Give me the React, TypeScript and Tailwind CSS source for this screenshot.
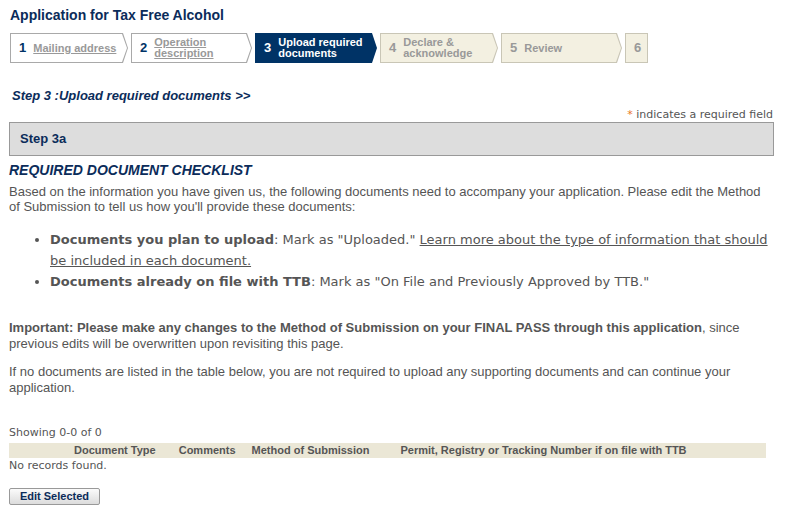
import React from 'react';

type Step = { num: string; label: string; state: 'done' | 'current' | 'todo'; width: string; last?: boolean };

const STEPS: Step[] = [
    { num: '1', label: 'Mailing address', state: 'done', width: 'w-[118px]' },
    { num: '2', label: 'Operation\ndescription', state: 'done', width: 'w-[121px]' },
    { num: '3', label: 'Upload required\ndocuments', state: 'current', width: 'w-[122px]' },
    { num: '4', label: 'Declare &\nacknowledge', state: 'todo', width: 'w-[118px]' },
    { num: '5', label: 'Review', state: 'todo', width: 'w-[121px]' },
    { num: '6', label: '', state: 'todo', width: 'w-[23px]', last: true },
];

const arrowClip = '[clip-path:polygon(0_0,calc(100%-5px)_0,100%_50%,calc(100%-5px)_100%,0_100%)]';

const StepItem: React.FC<{ step: Step }> = ({ step }) => {
    const outer = step.state === 'current' ? 'bg-[#003366]' : step.state === 'done' ? 'bg-[#a9a9a9]' : 'bg-[#c9c6b6]';
    const inner = step.state === 'current' ? 'bg-[#003366]' : step.state === 'done' ? 'bg-white' : 'bg-[#f3f0e1]';
    const numColor = step.state === 'current' ? 'text-white' : step.state === 'done' ? 'text-[#003366]' : 'text-[#999]';
    const labelColor = step.state === 'current' ? 'text-white' : 'text-[#999]';
    const clip = step.last ? '' : arrowClip;
    return (
        <div className={`${step.width} h-[30px] p-px ${outer} ${clip} shrink-0`}>
            <div className={`h-full ${inner} ${clip} flex items-center pl-[8px] gap-[7px]`}>
                <span className={`text-[13px] font-bold ${numColor}`}>{step.num}</span>
                {step.label && (
                    <span className={`text-[11px] font-bold leading-[11px] whitespace-pre-line ${labelColor} ${step.state === 'done' ? 'underline' : ''}`}>
                        {step.label}
                    </span>
                )}
            </div>
        </div>
    );
};

const App: React.FC = () => {
    return (
        <div className="w-[796px] h-[532px] bg-white font-['Liberation_Sans',Arial,sans-serif] text-[#555] overflow-hidden">
            <div className="pl-[9px] pr-[22px] pt-[6px]">
                <h1 className="text-[14px] font-bold text-[#0b2c5a] leading-[18px] pl-px">Application for Tax Free Alcohol</h1>

                <div className="flex mt-[9px] ml-px gap-[3px]">
                    {STEPS.map(s => <StepItem key={s.num} step={s} />)}
                </div>

                <p className="mt-[25px] ml-[3px] text-[13px] font-bold italic text-[#0b2c5a] leading-[16px]">Step 3 :Upload required documents &gt;&gt;</p>

                <p className="mt-[3px] text-right text-[11px] leading-[15px] font-['DejaVu_Sans',Verdana,sans-serif] pr-px">
                    <span className="text-[#e87722]">*</span> indicates a required field
                </p>

                <div className="h-[34px] bg-[#dddddd] border border-[#999] flex items-center pl-[10px]">
                    <span className="text-[13px] font-bold text-[#0b2c5a]">Step 3a</span>
                </div>

                <h2 className="mt-[6px] text-[14px] font-bold italic text-[#0b2c5a] leading-[16px]">REQUIRED DOCUMENT CHECKLIST</h2>
                <p className="mt-[6px] text-[13px] leading-[15px]">
                    Based on the information you have given us, the following documents need to accompany your application. Please edit the Method of Submission to tell us how you'll provide these documents:
                </p>

                <ul className="mt-[15px] pl-[41px] list-disc font-['DejaVu_Sans',Verdana,sans-serif] text-[13px] leading-[21px]">
                    <li>
                        <b>Documents you plan to upload</b>: Mark as "Uploaded." <a className="underline">Learn more about the type of information that should be included in each document.</a>
                    </li>
                    <li>
                        <b>Documents already on file with TTB</b>: Mark as "On File and Previously Approved by TTB."
                    </li>
                </ul>

                <p className="mt-[28px] text-[13px] leading-[16px]">
                    <b>Important: Please make any changes to the Method of Submission on your FINAL PASS through this application</b>, since previous edits will be overwritten upon revisiting this page.
                </p>
                <p className="mt-[12px] text-[13px] leading-[16px]">
                    If no documents are listed in the table below, you are not required to upload any supporting documents and can continue your application.
                </p>

                <p className="mt-[30px] text-[11px] leading-[14px] font-['DejaVu_Sans',Verdana,sans-serif]">Showing 0-0 of 0</p>
                <div className="mt-[3px] mr-[8px] h-[15px] bg-[#ebe7d6] flex items-center text-[11px] font-bold">
                    <span className="ml-[65px]">Document Type</span>
                    <span className="ml-[23px]">Comments</span>
                    <span className="ml-[16px]">Method of Submission</span>
                    <span className="ml-[31px]">Permit, Registry or Tracking Number if on file with TTB</span>
                </div>
                <p className="text-[11px] leading-[15px] font-['DejaVu_Sans',Verdana,sans-serif]">No records found.</p>

                <button className="mt-[15px] w-[91px] h-[17px] border border-[#999] rounded-[2px] bg-gradient-to-b from-[#fbfbfb] to-[#dcdcdc] text-[11px] font-bold text-[#0b2c5a] leading-none">
                    Edit Selected
                </button>
            </div>
        </div>
    );
};

export default App;
